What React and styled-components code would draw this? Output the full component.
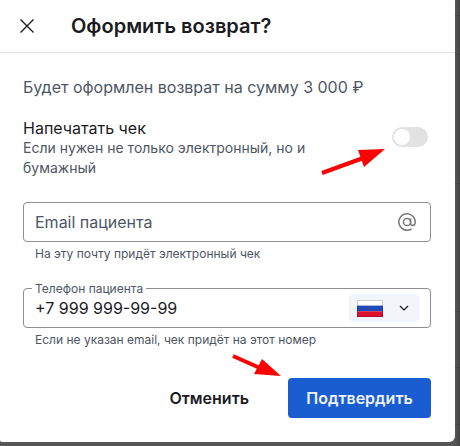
import React from "react"
import styled, { createGlobalStyle } from "styled-components"

const GlobalStyle = createGlobalStyle`
  html, body { margin: 0; padding: 0; background: #484848; }
  body { font-family: Inter, "Liberation Sans", sans-serif; }
  * { box-sizing: border-box; }
`

// the dimmed page behind the dialog only shows as a thin strip on the right
const backdropLine = (y) => `linear-gradient(#3f444a, #3f444a) 0 ${y}px / 100% 1px no-repeat`

const Stage = styled.div`
  position: relative;
  width: 460px;
  height: 446px;
  overflow: hidden;
  background:
    ${[15, 54, 183, 311, 367, 424].map(backdropLine).join(", ")},
    linear-gradient(90deg, #565656 455px, #454545 460px);
`

const Dialog = styled.div`
  width: 455px;
  height: 442px;
  background: #fff;
  border-bottom-left-radius: 2px;
  border-bottom-right-radius: 6px;
  display: flex;
  flex-direction: column;
`

const Header = styled.header`
  height: 53px;
  flex: none;
  display: flex;
  align-items: center;
  padding-left: 19px;
  gap: 36px;
  border-bottom: 1px solid #e2e2e4;
`

const CloseButton = styled.button`
  width: 16px;
  height: 16px;
  padding: 0;
  border: 0;
  background: none;
  display: flex;
`

const Title = styled.h2`
  margin: 0;
  font-size: 20px;
  font-weight: 600;
  color: #1b1b1f;
`

const Body = styled.div`
  padding: 24px 24px 0 23px;
  display: flex;
  flex-direction: column;
`

const Summary = styled.p`
  margin: 0 0 21px;
  font-size: 16px;
  line-height: 20px;
  color: #4d5664;
`

const PrintRow = styled.div`
  display: flex;
  justify-content: space-between;
  align-items: flex-start;
  margin-bottom: 24px;
`

const PrintText = styled.div`
  width: 320px;
`

const PrintTitle = styled.div`
  font-size: 16px;
  line-height: 20px;
  color: #1b1b1f;
`

const PrintHint = styled.div`
  font-size: 14px;
  line-height: 20px;
  color: #4d5664;
`

const Switch = styled.div`
  width: 36px;
  height: 20px;
  margin: 9px 3px 0 0;
  padding: 2px;
  border-radius: 10px;
  background: #e2e2e2;
`

const Knob = styled.div`
  width: 16px;
  height: 16px;
  border-radius: 50%;
  background: #fff;
`

const Field = styled.div`
  position: relative;
  height: 40px;
  display: flex;
  align-items: center;
  justify-content: space-between;
  padding: 0 13px 0 11px;
  border: 1px solid #8e8e93;
  border-radius: 4px;
`

const Legend = styled.span`
  position: absolute;
  left: 8px;
  top: -7px;
  padding: 0 3px;
  background: #fff;
  font-size: 12px;
  line-height: 13px;
  color: #4d5664;
`

const Placeholder = styled.span`
  font-size: 16px;
  color: #4d5664;
`

const Value = styled.span`
  font-size: 16px;
  color: #1b1b1f;
  margin-top: ${({ $shift }) => $shift || 0}px;
`

const Help = styled.div`
  margin: 4px 0 ${({ $gap }) => $gap}px 12px;
  font-size: 12px;
  line-height: 16px;
  color: #4d5664;
`

const CountryPicker = styled.div`
  position: absolute;
  right: 11px;
  top: 5px;
  width: 70px;
  height: 28px;
  border-radius: 4px;
  background: #f2f5fa;
  display: flex;
  align-items: center;
  padding-left: 8px;
  gap: 16px;
`

const Footer = styled.footer`
  display: flex;
  justify-content: flex-end;
  align-items: center;
  gap: 39px;
  margin-top: 30px;
  padding-right: 24px;
`

const GhostButton = styled.button`
  padding: 0;
  height: 40px;
  border: 0;
  background: none;
  font: 600 16px Inter, "Liberation Sans", sans-serif;
  color: #1b1b1f;
`

const PrimaryButton = styled.button`
  width: 143px;
  height: 40px;
  border: 0;
  border-radius: 4px;
  background: #1a5dd0;
  font: 600 16px Inter, "Liberation Sans", sans-serif;
  color: #eef3fc;
`

const Arrow = styled.svg`
  position: absolute;
  left: ${({ $x }) => $x}px;
  top: ${({ $y }) => $y}px;
  overflow: visible;
`

const AtIcon = () => (
  <svg width="20" height="20" viewBox="0 0 20 20" fill="none" stroke="#77777c" strokeWidth="1.5">
    <circle cx="10" cy="10" r="3.6" />
    <path d="M13.6 6.4v4.8c0 1.5 1 2.3 2.2 2.3s2.4-1.2 2.4-3.5c0-4.6-3.6-8.2-8.2-8.2a8.2 8.2 0 1 0 4.6 15" />
  </svg>
)

export default function App() {
  return (
    <Stage>
      <GlobalStyle />
      <Dialog>
        <Header>
          <CloseButton>
            <svg width="16" height="16" viewBox="0 0 16 16" stroke="#1b1b1f" strokeWidth="1.4">
              <path d="M1.5 1.5l13 13M14.5 1.5l-13 13" />
            </svg>
          </CloseButton>
          <Title>Оформить возврат?</Title>
        </Header>
        <Body>
          <Summary>Будет оформлен возврат на сумму 3 000 ₽</Summary>
          <PrintRow>
            <PrintText>
              <PrintTitle>Напечатать чек</PrintTitle>
              <PrintHint>Если нужен не только электронный, но и бумажный</PrintHint>
            </PrintText>
            <Switch>
              <Knob />
            </Switch>
          </PrintRow>
          <Field>
            <Placeholder>Email пациента</Placeholder>
            <AtIcon />
          </Field>
          <Help $gap={26}>На эту почту придёт электронный чек</Help>
          <Field>
            <Legend>Телефон пациента</Legend>
            <Value $shift={0}>+7 999 999-99-99</Value>
            <CountryPicker>
              <svg width="26" height="17" viewBox="0 0 26 17">
                <rect width="26" height="6" fill="#fff" />
                <rect y="5.6" width="26" height="5.7" fill="#2249b8" />
                <rect y="11.3" width="26" height="5.7" fill="#dd1030" />
                <rect x=".5" y=".5" width="25" height="16" fill="none" stroke="#000" strokeOpacity=".18" />
              </svg>
              <svg width="10" height="6" viewBox="0 0 10 6" fill="none" stroke="#1b1b1f" strokeWidth="1.2">
                <path d="M1 1l4 4 4-4" />
              </svg>
            </CountryPicker>
          </Field>
          <Help $gap={0}>Если не указан email, чек придёт на этот номер</Help>
        </Body>
        <Footer>
          <GhostButton>Отменить</GhostButton>
          <PrimaryButton>Подтвердить</PrimaryButton>
        </Footer>
      </Dialog>
      <Arrow $x={320} $y={148} width="68" height="28" viewBox="0 0 68 28">
        <path d="M2 25L46 9" stroke="#f00" strokeWidth="4" />
        <path d="M65 1L38 2L44 19Z" fill="#f00" />
      </Arrow>
      <Arrow $x={232} $y={353} width="56" height="26" viewBox="0 0 56 26">
        <path d="M1 3L28 15" stroke="#f00" strokeWidth="4" />
        <path d="M49 23L22 21L30 6Z" fill="#f00" />
      </Arrow>
    </Stage>
  )
}
